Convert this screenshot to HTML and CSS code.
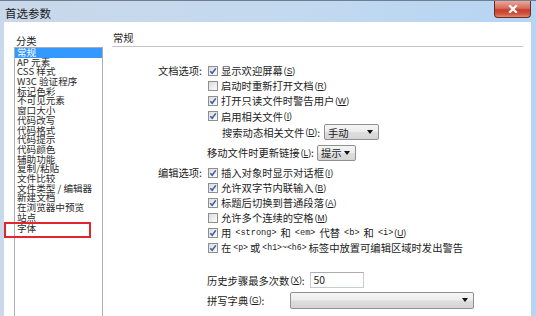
FILE: index.html
```html
<!DOCTYPE html>
<html lang="zh-CN">
<head>
<meta charset="utf-8">
<title>首选参数</title>
<link rel="stylesheet" href="styles.css">
</head>
<body>
<div class="window">
  <div class="titlebar">
    <span class="title">首选参数</span>
    <div class="close"><svg width="10" height="8" viewBox="0 0 10 8"><path d="M2 1 L8 7 M8 1 L2 7" stroke="#fff" stroke-width="2.2" stroke-linecap="square"/></svg></div>
  </div>
  <div class="client">
    <div class="sidebar">
      <div class="cat-label">分类</div>
      <ul class="listbox">
        <li class="sel">常规</li>
        <li>AP 元素</li>
        <li>CSS 样式</li>
        <li>W3C 验证程序</li>
        <li>标记色彩</li>
        <li>不可见元素</li>
        <li>窗口大小</li>
        <li>代码改写</li>
        <li>代码格式</li>
        <li>代码提示</li>
        <li>代码颜色</li>
        <li>辅助功能</li>
        <li>复制/粘贴</li>
        <li>文件比较</li>
        <li>文件类型 / 编辑器</li>
        <li>新建文档</li>
        <li>在浏览器中预览</li>
        <li>站点</li>
        <li class="last">字体</li>
      </ul>
    </div>
    <div class="main">
      <div class="heading">常规</div>
      <div class="group g-doc">
        <div class="glabel">文档选项:</div>
        <div class="gitems">
          <div class="row h15"><span class="cb"><svg viewBox="0 0 8 8"><path d="M1.3 4.2 L3.2 6.3 L6.8 1.4" /></svg></span>显示欢迎屏幕 <span class="mn">(<u>S</u>)</span></div>
          <div class="row h15"><span class="cb"></span>启动时重新打开文档 <span class="mn">(<u>R</u>)</span></div>
          <div class="row h15"><span class="cb"><svg viewBox="0 0 8 8"><path d="M1.3 4.2 L3.2 6.3 L6.8 1.4" /></svg></span>打开只读文件时警告用户 <span class="mn">(<u>W</u>)</span></div>
          <div class="row h16"><span class="cb"><svg viewBox="0 0 8 8"><path d="M1.3 4.2 L3.2 6.3 L6.8 1.4" /></svg></span>启用相关文件 <span class="mn">(<u>I</u>)</span></div>
          <div class="row h16 indent">搜索动态相关文件 <span class="mn">(<u>D</u>)</span>:<div class="select s-manual"><span>手动</span><i class="arrow"></i></div></div>
          <div class="row h25 outdent">移动文件时更新链接 <span class="mn">(<u>L</u>)</span>:<div class="select s-prompt"><span>提示</span><i class="arrow"></i></div></div>
        </div>
      </div>
      <div class="group g-edit">
        <div class="glabel">编辑选项:</div>
        <div class="gitems">
          <div class="row h15"><span class="cb"><svg viewBox="0 0 8 8"><path d="M1.3 4.2 L3.2 6.3 L6.8 1.4" /></svg></span>插入对象时显示对话框 <span class="mn">(<u>I</u>)</span></div>
          <div class="row h15"><span class="cb"><svg viewBox="0 0 8 8"><path d="M1.3 4.2 L3.2 6.3 L6.8 1.4" /></svg></span>允许双字节内联输入 <span class="mn">(<u>B</u>)</span></div>
          <div class="row h15"><span class="cb"><svg viewBox="0 0 8 8"><path d="M1.3 4.2 L3.2 6.3 L6.8 1.4" /></svg></span>标题后切换到普通段落 <span class="mn">(<u>A</u>)</span></div>
          <div class="row h15"><span class="cb"></span>允许多个连续的空格 <span class="mn">(<u>M</u>)</span></div>
          <div class="row h15 r-strong"><span class="cb"><svg viewBox="0 0 8 8"><path d="M1.3 4.2 L3.2 6.3 L6.8 1.4" /></svg></span>用<code>&lt;strong&gt;</code>和<code>&lt;em&gt;</code>代替<code>&lt;b&gt;</code>和<code class="tight">&lt;i&gt;</code><span class="mn">(<u>U</u>)</span></div>
          <div class="row h15 r-warn"><span class="cb"><svg viewBox="0 0 8 8"><path d="M1.3 4.2 L3.2 6.3 L6.8 1.4" /></svg></span>在<code>&lt;p&gt;</code>或<code>&lt;h1&gt;~&lt;h6&gt;</code>标签中放置可编辑区域时发出警告</div>
        </div>
      </div>
      <div class="extra">
        <div class="row h20">历史步骤最多次数 <span class="mn">(<u>X</u>)</span>:<div class="input">50</div></div>
        <div class="row h20">拼写字典 <span class="mn">(<u>G</u>)</span>:<div class="select s-dict"><span></span><i class="arrow"></i></div></div>
      </div>
    </div>
    <div class="highlight"></div>
  </div>
</div>
</body>
</html>
```
FILE: styles.css
```css
* { box-sizing: border-box; margin: 0; padding: 0; }
html, body { width: 536px; height: 316px; overflow: hidden; }
body {
  background: linear-gradient(90deg, #c9d8ea 0%, #c3d9ef 55%, #b6d4f3 100%);
  font-family: "Noto Sans CJK SC", "Noto Sans", sans-serif;
  font-size: 10.3px;
  color: #1c1c1c;
}
.window { height: 316px; display: flex; flex-direction: column; border-top: 1px solid #6f7f92; }
.titlebar { height: 21px; flex: none; display: flex; justify-content: space-between; align-items: flex-start; padding-left: 5px; }
.title { font-size: 11.5px; line-height: 20px; padding-top: 2px; color: #1a1a1a; }
.close {
  width: 37px; height: 17px; margin-right: 5px;
  border: 1px solid #6b2a24; border-top: 0; border-radius: 0 0 4px 4px;
  background: linear-gradient(#eba79a 0%, #d66c5c 45%, #c43f2d 55%, #cf523d 80%, #df8a70 100%);
  display: flex; align-items: center; justify-content: center;
}
.client { flex: 1; min-height: 0; background: #fff; margin: 0 5px 0 4px; display: flex; position: relative; }

.sidebar { width: 99px; flex: none; padding: 13px 0 0 10px; display: flex; flex-direction: column; }
.cat-label { line-height: 12px; padding-left: 2px; }
.listbox { list-style: none; flex: 1; border: 1px solid #a9aeb6; border-bottom: 0; color: #2a2a2a; }
.listbox li { height: 9.7px; line-height: 9.7px; padding-left: 2px; white-space: nowrap; font-size: 9.6px; }
.listbox li.sel { background: #3399ff; color: #fff; }
.listbox li.last { margin-top: 2px; }
.highlight { position: absolute; left: 0; top: 200px; width: 87px; height: 16px; border: 2px solid #e3252d; }

.main { flex: 1; margin-left: 9px; margin-right: 8px; padding-top: 10px; }
.heading { line-height: 12px; padding-left: 1px; padding-bottom: 2px; border-bottom: 1px solid #c6c6c6; }
.group { display: flex; column-gap: 6px; }
.g-doc { margin-top: 16px; }
.glabel { width: 90px; flex: none; text-align: right; line-height: 15px; }
.gitems { display: flex; flex-direction: column; }
.row { display: flex; align-items: center; white-space: nowrap; }
.h15 { height: 15px; }
.h16 { height: 16px; }
.h20 { height: 20px; }
.h25 { height: 25px; }
.indent { padding-left: 14px; }
.outdent { margin-left: -1px; }
.cb {
  width: 10px; height: 10px; flex: none; margin-right: 3px;
  border: 1px solid #8e8f8f; background: linear-gradient(135deg, #dcdcdc, #fbfbfb);
  display: flex; align-items: center; justify-content: center;
}
.cb svg { width: 8px; height: 8px; fill: none; stroke: #3b5ea5; stroke-width: 1.6; }
.mn { font-family: "Liberation Sans", sans-serif; font-size: 8.5px; margin-left: 1px; }
.mn u { text-decoration-thickness: 1px; }
code { font-family: "Liberation Mono", monospace; font-size: 8.6px; }
.r-strong code { margin: 0 4px; }
.r-strong code.tight { margin-right: 0; }
.r-warn code { margin: 0 2px; font-size: 8.2px; }

.select {
  height: 16px; display: flex; align-items: center; justify-content: space-between;
  border: 1px solid #8f9091; border-radius: 2px; padding: 0 5px 0 3px;
  background: linear-gradient(#f5f5f5 0%, #ececec 48%, #dedede 52%, #d5d5d5 100%);
}
.arrow { width: 0; height: 0; border-left: 3px solid transparent; border-right: 3px solid transparent; border-top: 4px solid #111; }
.s-manual { width: 55px; margin-left: 4px; }
.s-prompt { width: 39px; margin-left: 3px; }
.s-dict { width: 184px; margin-left: 26px; height: 17px; }
.input {
  width: 54px; height: 16px; margin-left: 5px; padding-left: 3px; line-height: 14px;
  border: 1px solid #c5cad3; border-top-color: #abadb3; background: #fff;
}
.extra { margin-left: 95px; margin-top: 15px; display: flex; flex-direction: column; }
```
